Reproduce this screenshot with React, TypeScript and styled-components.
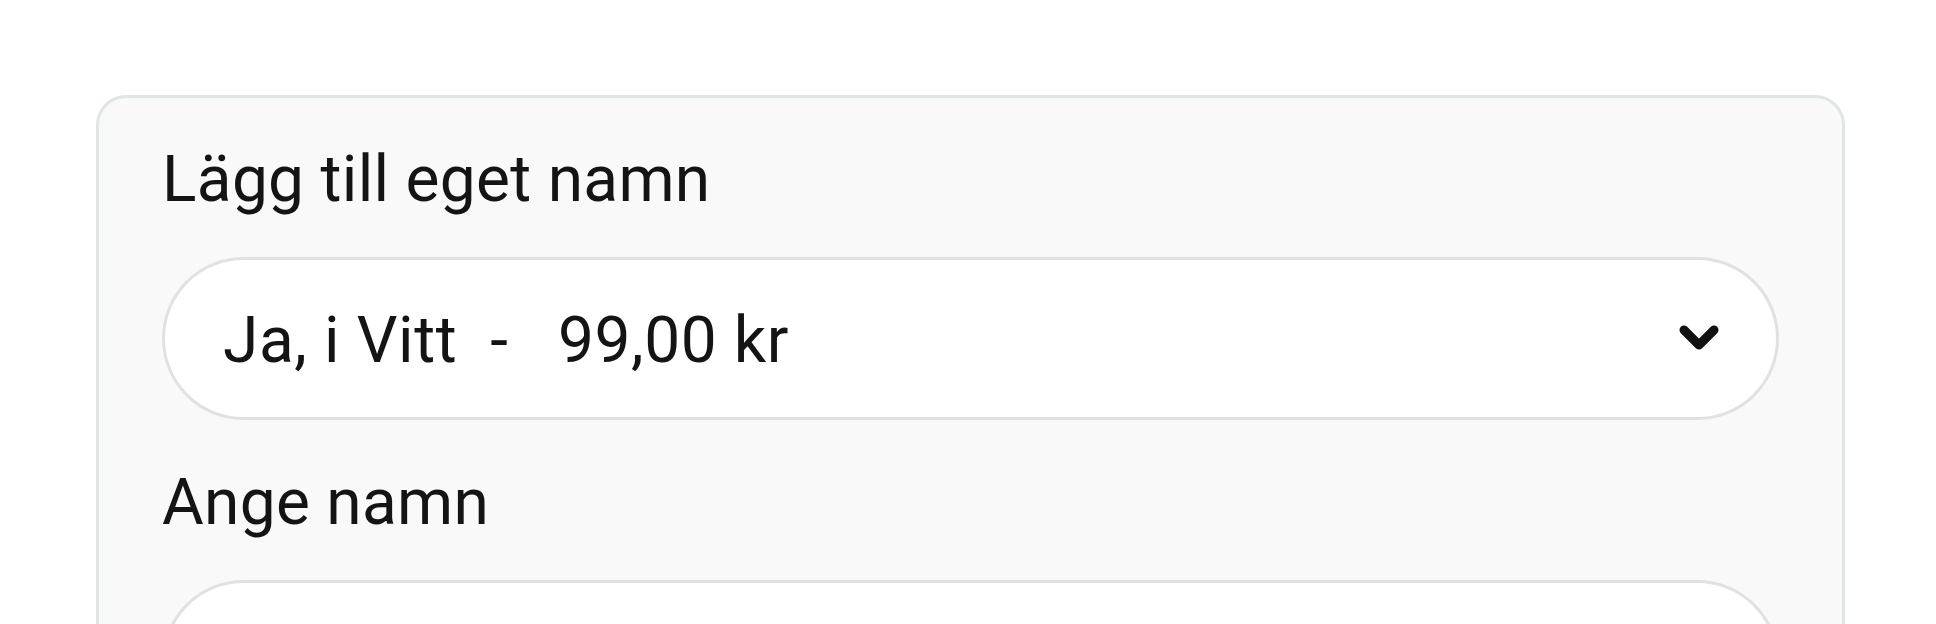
import React, { useState } from 'react'
import styled, { createGlobalStyle } from 'styled-components'

const GlobalStyle = createGlobalStyle`
  html, body {
    margin: 0;
    padding: 0;
    background: #ffffff;
  }

  body {
    font-family: Roboto, 'Liberation Sans', Arial, sans-serif;
    color: #141414;
  }

  * {
    box-sizing: border-box;
  }
`

const Page = styled.div`
  padding: 95px 91px 0 96px;
`

const Card = styled.section`
  display: flex;
  flex-direction: column;
  gap: 45px;
  padding: 44px 63px 64px 63px;
  background: #f9f9f9;
  border: 3px solid #dfe6e5;
  border-radius: 30px;
`

const Field = styled.div`
  display: flex;
  flex-direction: column;
  gap: 38px;
`

const Label = styled.label`
  font-size: 64px;
  line-height: 1.2;
  font-weight: 400;
  letter-spacing: 0.3px;
  color: #141414;
`

const SelectBox = styled.button`
  display: flex;
  align-items: center;
  justify-content: space-between;
  width: 100%;
  height: 163px;
  padding: 6px 57px 0 58px;
  background: #ffffff;
  border: 3px solid #e1e1e1;
  border-radius: 999px;
  font-family: inherit;
  font-size: 64px;
  font-weight: 400;
  line-height: 1.2;
  color: #141414;
  text-align: left;
  cursor: pointer;
`

const SelectValue = styled.span`
  white-space: pre;
  letter-spacing: 0.6px;
`

const ChevronIcon = styled.svg`
  flex-shrink: 0;
  margin-top: -6px;
`

const TextInput = styled.input`
  width: 100%;
  height: 163px;
  padding: 0 58px;
  background: #ffffff;
  border: 3px solid #e1e1e1;
  border-radius: 999px;
  font-family: inherit;
  font-size: 64px;
  font-weight: 400;
  color: #141414;
  outline: none;
`

const Chevron = () => (
  <ChevronIcon width="40" height="26" viewBox="0 0 40 26" aria-hidden="true">
    <polyline
      points="5,5 20,20 35,5"
      fill="none"
      stroke="#111111"
      strokeWidth="9"
      strokeLinecap="round"
      strokeLinejoin="round"
    />
  </ChevronIcon>
)

const App: React.FC = () => {
  const [name, setName] = useState('')

  return (
    <>
      <GlobalStyle />
      <Page>
        <Card>
          <Field>
            <Label>Lägg till eget namn</Label>
            <SelectBox type="button">
              <SelectValue>{'Ja, i Vitt  -   99,00 kr'}</SelectValue>
              <Chevron />
            </SelectBox>
          </Field>
          <Field>
            <Label htmlFor="custom-name">Ange namn</Label>
            <TextInput id="custom-name" value={name} onChange={(e) => setName(e.target.value)} />
          </Field>
        </Card>
      </Page>
    </>
  )
}

export default App
